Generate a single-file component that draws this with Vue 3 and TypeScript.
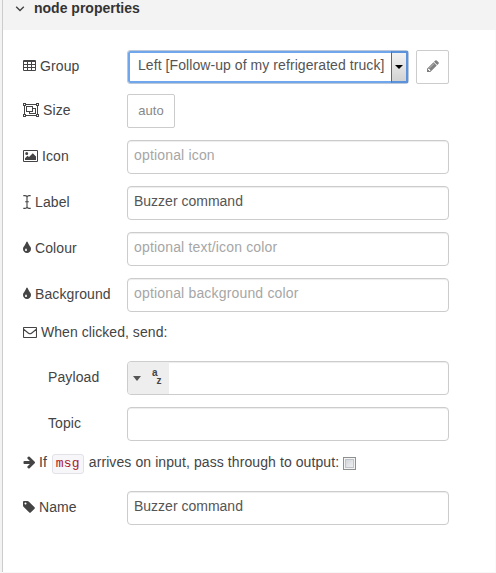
<script setup lang="ts">
import { ref } from 'vue'

const label = ref('Buzzer command')
const name = ref('Buzzer command')
const icon = ref('')
const colour = ref('')
const background = ref('')
const payload = ref('')
const topic = ref('')
</script>

<template>
  <div class="panel">
    <header class="head">
      <svg class="chev" width="10" height="6" viewBox="0 0 10 6"><path d="M1.2 .8 5 4.6 8.8 .8" /></svg>
      <span class="title">node properties</span>
    </header>

    <form class="form" @submit.prevent>
      <div class="row">
        <label class="lab">
          <svg class="ic table" width="13" height="11" viewBox="0 0 13 11"><path fill-rule="evenodd" d="M1 0h11a1 1 0 0 1 1 1v9a1 1 0 0 1-1 1H1a1 1 0 0 1-1-1V1a1 1 0 0 1 1-1zM1 2v2h3V2zM5 2v2h3V2zM9 2v2h3V2zM1 5v2h3V5zM5 5v2h3V5zM9 5v2h3V5zM1 8v2h3V8zM5 8v2h3V8zM9 8v2h3V8z" /></svg>
          <span>Group</span>
        </label>
        <div class="select">
          <span class="value">Left [Follow-up of my refrigerated truck]</span>
          <span class="drop"><i class="caret dark"></i></span>
        </div>
        <button class="btn edit" type="button">
          <svg width="14" height="14" viewBox="0 0 1792 1792"><path d="M491 1536l91-91-235-235-91 91v107h128v128h107zm523-928q0-22-22-22-10 0-17 7l-542 542q-7 7-7 17 0 22 22 22 10 0 17-7l542-542q7-7 7-17zm-54-192l416 416-832 832h-416v-416zm683 96q0 53-37 90l-166 166-416-416 166-165q36-38 90-38 53 0 91 38l235 234q37 39 37 91z" /></svg>
        </button>
      </div>

      <div class="row size">
        <label class="lab">
          <svg class="ic" width="16" height="14" viewBox="0 0 16 14"><path fill-rule="evenodd" d="M0 0h3v1h10V0h3v3h-1v8h1v3h-3v-1H3v1H0v-3h1V3H0zM3 2v1H2v8h1v1h10v-1h1V3h-1V2zM1 1v1h1V1zM14 1v1h1V1zM1 12v1h1v-1zM14 12v1h1v-1zM3 3h7v2h3v6H6V9H3zM4 4v4h5V4zM10 6v3H7v1h5V6z" /></svg>
          <span>Size</span>
        </label>
        <button class="btn auto" type="button"><span>auto</span></button>
      </div>

      <div class="row">
        <label class="lab">
          <svg class="ic" width="15" height="12" viewBox="0 0 15 12"><path fill-rule="evenodd" d="M1 0h13a1 1 0 0 1 1 1v10a1 1 0 0 1-1 1H1a1 1 0 0 1-1-1V1a1 1 0 0 1 1-1zM1 1v10h13V1zM2 10V8.200l2.500-2.500L6 7.100l3.800-3.800L13 6.500V10zM3.700 2a1.500 1.500 0 1 1 0 3 1.500 1.500 0 0 1 0-3z" /></svg>
          <span>Icon</span>
        </label>
        <input v-model="icon" class="field" placeholder="optional icon">
      </div>

      <div class="row">
        <label class="lab">
          <svg class="ic" width="8" height="14" viewBox="0 0 8 14"><path class="line" d="M.3.6h1.500Q4 .6 4 2.500 4 .6 6.200.6h1.500M.3 13.400h1.500Q4 13.400 4 11.500q0 1.900 2.200 1.900h1.500M4 2v10M2.200 6.800h3.600" /></svg>
          <span>Label</span>
        </label>
        <input v-model="label" class="field">
      </div>

      <div class="row">
        <label class="lab">
          <svg class="ic" width="8" height="14" viewBox="384 0 1024 1792"><path d="M896 1152q0-36-20-69-1-1-15.500-22.500t-25.500-38-25-44-21-50.500q-4-16-21-16t-21 16q-7 23-21 50.500t-25 44-25.500 38-15.500 22.500q-20 33-20 69 0 53 37.500 90.500t90.500 37.500 90.500-37.500 37.500-90.500zm512-128q0 212-150 362t-362 150-362-150-150-362q0-145 81-275 6-9 62.500-90.500t101-151 99.500-178 83-201.500q9-30 34-47t51-17 51.500 17 33.500 47q28 93 83 201.500t99.500 178 101 151 62.500 90.500q81 127 81 275z" /></svg>
          <span>Colour</span>
        </label>
        <input v-model="colour" class="field" placeholder="optional text/icon color">
      </div>

      <div class="row">
        <label class="lab">
          <svg class="ic" width="8" height="14" viewBox="384 0 1024 1792"><path d="M896 1152q0-36-20-69-1-1-15.500-22.500t-25.500-38-25-44-21-50.500q-4-16-21-16t-21 16q-7 23-21 50.500t-25 44-25.500 38-15.500 22.500q-20 33-20 69 0 53 37.500 90.500t90.500 37.500 90.500-37.500 37.500-90.500zm512-128q0 212-150 362t-362 150-362-150-150-362q0-145 81-275 6-9 62.500-90.500t101-151 99.500-178 83-201.500q9-30 34-47t51-17 51.500 17 33.500 47q28 93 83 201.500t99.500 178 101 151 62.500 90.500q81 127 81 275z" /></svg>
          <span>Background</span>
        </label>
        <input v-model="background" class="field" placeholder="optional background color">
      </div>

      <div class="line-row send">
        <svg class="ic" width="14" height="11" viewBox="0 0 14 11"><path class="line" d="M1.200.5h11.600q.7 0 .7.700v8.600q0 .7-.7.700H1.200q-.7 0-.7-.7V1.200q0-.7.7-.7zM.6 2.200 5.500 6.200q1.500 1.200 3 0l4.900-4" /></svg>
        <span>When clicked, send:</span>
      </div>

      <div class="row">
        <label class="lab sub"><span>Payload</span></label>
        <div class="typed">
          <span class="type">
            <i class="caret"></i>
            <span class="az"><b>a</b><b class="z">z</b></span>
          </span>
          <input v-model="payload" class="bare">
        </div>
      </div>

      <div class="row">
        <label class="lab sub"><span>Topic</span></label>
        <input v-model="topic" class="field">
      </div>

      <div class="line-row pass">
        <svg class="ic" width="12" height="14" viewBox="64 0 1536 1792"><path d="M1600 960q0 54-37 91l-651 651q-39 37-91 37-51 0-90-37l-75-75q-38-38-38-91t38-91l293-293h-704q-52 0-84.500-37.500t-32.500-90.500v-128q0-53 32.500-90.500t84.500-37.500h704l-293-294q-38-36-38-90t38-90l75-75q38-38 90-38 53 0 91 38l651 651q37 35 37 90z" /></svg>
        <span class="lead">If</span>
        <code>msg</code>
        <span class="tail">arrives on input, pass through to output:</span>
        <span class="check" role="checkbox" aria-checked="false"></span>
      </div>

      <div class="row">
        <label class="lab">
          <svg class="ic" width="12" height="14" viewBox="128 0 1536 1792"><path d="M576 448q0-53-37.500-90.500t-90.500-37.500-90.500 37.500-37.500 90.500 37.500 90.500 90.500 37.500 90.500-37.500 37.500-90.500zm1067 576q0 53-37 90l-491 492q-39 37-91 37-53 0-90-37l-715-716q-38-37-64.500-101t-26.500-117v-416q0-52 38-90t90-38h416q53 0 117 26.500t102 64.500l715 714q37 39 37 91z" /></svg>
          <span>Name</span>
        </label>
        <input v-model="name" class="field">
      </div>
    </form>
  </div>
</template>

<style>
body {
  margin: 0;
  overflow: hidden;
}
</style>

<style scoped>
.panel {
  box-sizing: border-box;
  width: 496px;
  height: 573px;
  padding-left: 2px;
  border-right: 1px solid #fafafa;
  border-bottom: 1px solid #f7f7f7;
  background: linear-gradient(90deg, #f3f3f3 2px, #ccc 2px, #ccc 3px, #fff 3px);
  color: #444;
  font-family: "Liberation Sans", Arial, sans-serif;
  font-size: 14px;
  line-height: 20px;
  white-space: nowrap;
}
.head {
  display: flex;
  align-items: flex-start;
  box-sizing: border-box;
  height: 30px;
  margin: 0 -1px 0 1px;
  padding-left: 12px;
  background: #f3f3f3;
}
.chev {
  margin-top: 6px;
  fill: none;
  stroke: #444;
  stroke-width: 1.4;
}
.title {
  margin: -2px 0 0 9px;
  color: #333;
  font-weight: bold;
}
.form {
  display: flex;
  flex-direction: column;
  gap: 12px;
  padding: 20px 0 0 21px;
}
.row {
  display: flex;
  height: 34px;
}
.size {
  margin: -2px 0 0;
}
.lab {
  display: flex;
  align-items: center;
  box-sizing: border-box;
  width: 104px;
  height: 32px;
  letter-spacing: 0.1px;
}
.sub {
  padding-left: 25px;
}
.ic {
  flex: none;
  margin-right: 4px;
  fill: #444;
}
.table {
  margin-top: -2px;
}
.ic .line {
  fill: none;
  stroke: #444;
  stroke-width: 1.1;
}
.field,
.typed {
  box-sizing: border-box;
  width: 322px;
  height: 34px;
  border: 1px solid #ccc;
  border-radius: 4px;
  background: #fff;
  box-shadow: inset 0 1px 1px rgba(0, 0, 0, 0.075);
}
.field {
  padding: 0 6px 4px;
  outline: 0;
  color: #555;
  font: inherit;
}
.field::placeholder {
  color: #a6a6a6;
  letter-spacing: 0.17px;
  opacity: 1;
}
.select {
  display: flex;
  box-sizing: border-box;
  width: 282px;
  height: 34px;
  border: 1px solid #bcc8da;
  border-radius: 3px;
  box-shadow: inset 0 0 0 2px #70a6ec;
  color: #555;
}
.value {
  flex: 1;
  padding: 4px 0 0 10px;
  letter-spacing: 0.07px;
}
.drop {
  display: flex;
  align-items: center;
  justify-content: center;
  box-sizing: border-box;
  width: 17px;
  margin: 0 0 0 -1px;
  border: 2px solid #5a93dc;
  border-left: 1px solid #666;
  background: linear-gradient(#f2f2f2, #d2d2d2);
}
.caret {
  width: 0;
  height: 0;
  border: 4.5px solid transparent;
  border-top: 5px solid #555;
  border-bottom: 0;
}
.dark {
  border-width: 4px 4px 0;
  border-top-color: #000;
}
.btn {
  display: flex;
  align-items: center;
  justify-content: center;
  box-sizing: border-box;
  height: 34px;
  padding: 0;
  border: 1px solid #ccc;
  border-radius: 2px;
  background: #fff;
  color: #888;
  font: inherit;
  font-size: 13px;
}
.edit {
  width: 33px;
  margin-left: 7px;
  padding-bottom: 2px;
}
.edit svg {
  fill: #808080;
}
.auto {
  width: 48px;
  padding-bottom: 1px;
}
.line-row {
  display: flex;
  align-items: center;
  height: 20px;
}
.send {
  margin: -2px 0 7px;
  letter-spacing: 0.06px;
}
.typed {
  display: flex;
  overflow: hidden;
}
.type {
  display: flex;
  align-items: center;
  box-sizing: border-box;
  width: 41px;
  padding-left: 5px;
  background: #eee;
}
.az {
  display: flex;
  margin-left: 11px;
  font-size: 10px;
  line-height: 10px;
}
.az b {
  margin-top: -3px;
}
.az .z {
  margin: 5px 0 0 -1px;
}
.bare {
  flex: 1;
  min-width: 0;
  border: 0;
  outline: 0;
  background: transparent;
}
.pass {
  margin: -1px 0 7px;
}
code {
  box-sizing: border-box;
  width: 32px;
  height: 20px;
  margin: 3px 5px 0;
  padding: 0 3px;
  border: 1px solid #e1e1e8;
  border-radius: 3px;
  background: #f7f7f9;
  color: #ad1625;
  font: 13px/17px "Liberation Mono", "Courier New", monospace;
  letter-spacing: 0.2px;
}
.tail {
  letter-spacing: 0.09px;
}
.check {
  box-sizing: border-box;
  width: 13px;
  height: 13px;
  margin: 2px 0 0 4px;
  border: 1px solid #8e8f8f;
  box-shadow: inset 0 0 0 1px #f4f4f4, inset 0 0 0 2px #bfc4ca;
  background: linear-gradient(135deg, #cbcfd5, #f6f6f6);
}
</style>
